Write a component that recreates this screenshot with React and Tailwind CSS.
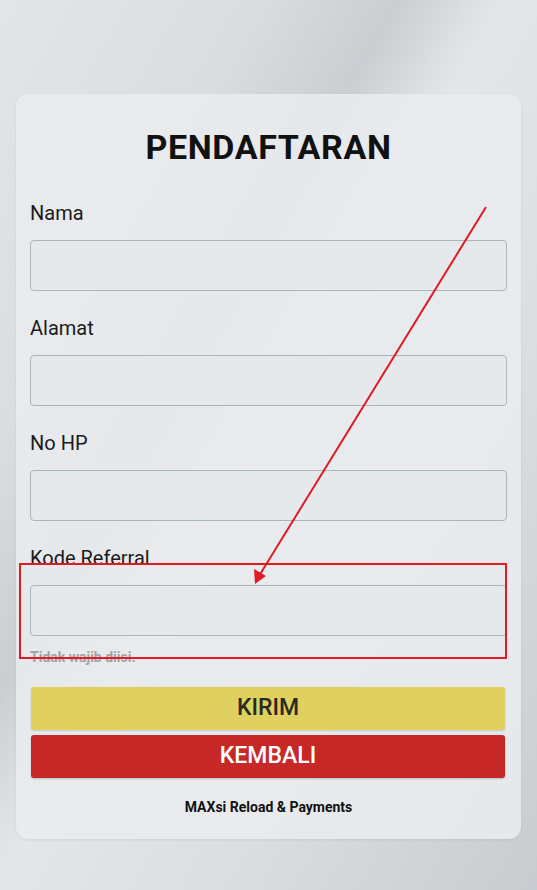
export default function App() {
  const fields = ["Nama", "Alamat", "No HP", "Kode Referral"];

  return (
    <div className="relative w-[537px] h-[890px] overflow-hidden bg-[linear-gradient(120deg,#e3e6e9_0%,#d9dde0_25%,#c9ced2_38%,#e4e7ea_48%,#dadee1_70%,#c7ccd0_100%)] font-['Roboto','Liberation_Sans',sans-serif]">
      <div className="pt-[94px] px-[16px]">
        <div className="rounded-[12px] bg-[#e9ebed]/90 shadow-[0_1px_3px_rgba(0,0,0,0.08)] px-[14px] pb-[21px]">
          <h1 className="pt-[33px] text-center text-[34px] leading-[40px] font-bold text-[#111] tracking-[0.6px]">
            PENDAFTARAN
          </h1>

          <div className="mt-[35px]">
            {fields.map((f, i) => (
              <div key={f} className={i > 0 ? "mt-[26px]" : ""}>
                <div className="text-[20px] leading-[22px] text-[#1b1b1b]">{f}</div>
                <div className="mt-[16px] h-[51px] rounded-[4px] border border-[#a8b6ba] bg-[#e6e9eb]" />
              </div>
            ))}
          </div>

          <div className="mt-[13px] text-[14px] leading-[16px] font-bold text-[#9ea3a6]">
            Tidak wajib diisi.
          </div>

          <button className="mt-[22px] block w-[474px] ml-[1px] h-[43px] rounded-[3px] bg-[#e0d060] text-[23px] font-medium text-[#2a2a22] shadow-[0_1px_2px_rgba(0,0,0,0.15)]">
            KIRIM
          </button>
          <button className="mt-[5px] block w-[474px] ml-[1px] h-[43px] rounded-[3px] bg-[#c62828] text-[23px] font-medium text-white shadow-[0_1px_2px_rgba(0,0,0,0.2)]">
            KEMBALI
          </button>

          <div className="mt-[19px] text-center text-[14px] font-bold text-[#111]">
            MAXsi Reload &amp; Payments
          </div>
        </div>
      </div>

      {/* red annotation overlay */}
      <svg className="absolute left-0 top-0 pointer-events-none" width="537" height="890">
        <rect x="20" y="564" width="486" height="94" fill="none" stroke="#e01b24" strokeWidth="2" />
        <line x1="486" y1="207" x2="259" y2="576" stroke="#e01b24" strokeWidth="2" />
        <polygon points="255,584 254,569 266,576" fill="#e01b24" />
      </svg>
    </div>
  );
}
